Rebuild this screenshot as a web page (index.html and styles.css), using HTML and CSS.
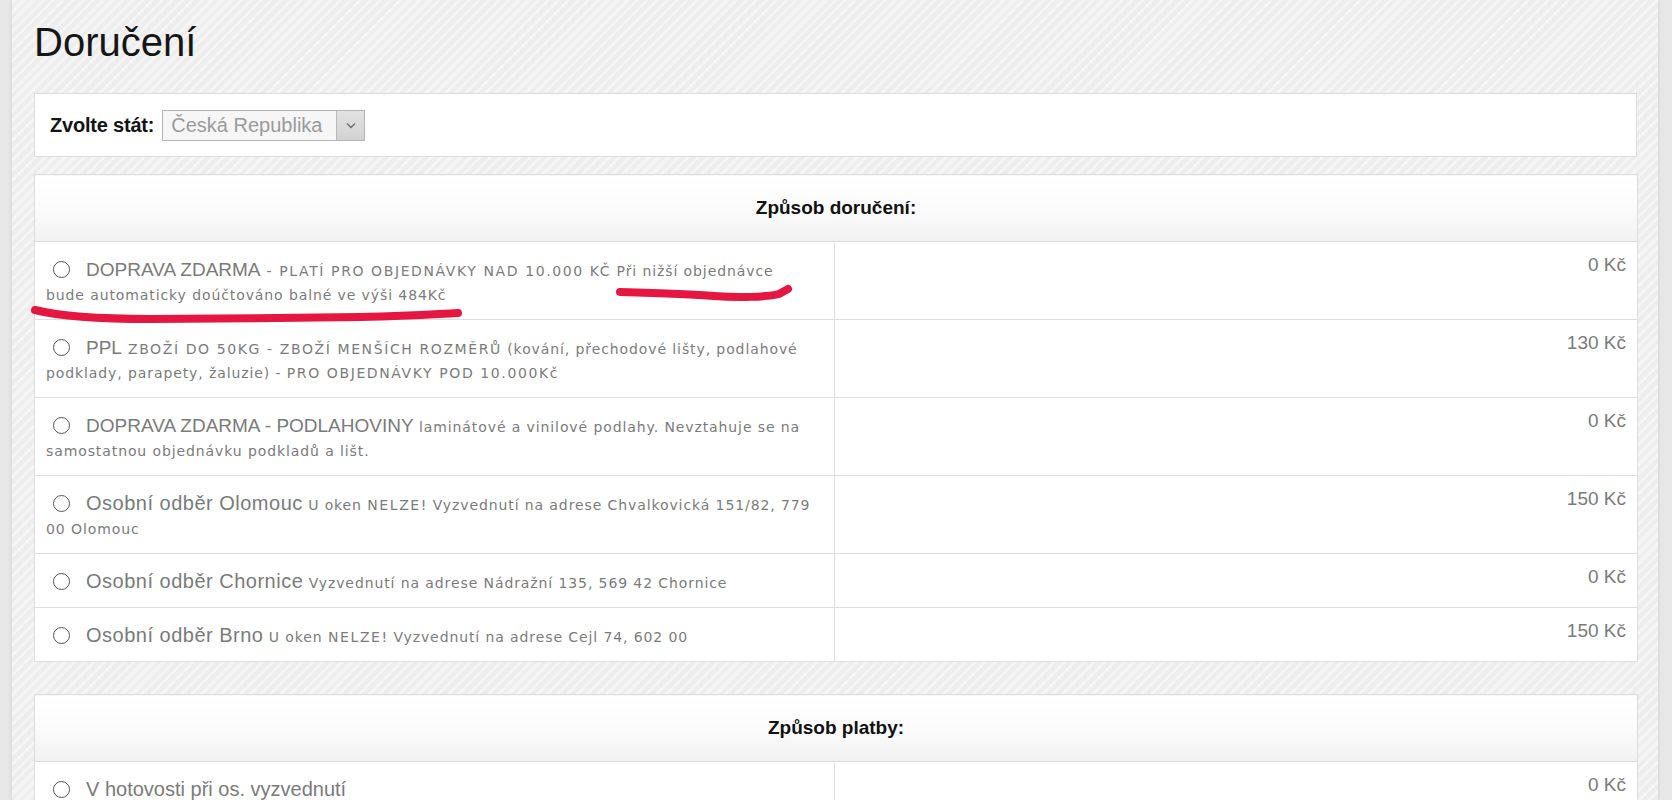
FILE: index.html
```html
<!DOCTYPE html>
<html lang="cs">
<head>
<meta charset="utf-8">
<title>Doručení</title>
<link rel="stylesheet" href="styles.css">
</head>
<body>
<div class="page">
  <h1 class="title">Doručení</h1>

  <div class="country">
    <span class="country-label">Zvolte stát:</span>
    <div class="select"><span class="select-value">Česká Republika</span><span class="select-arrow"><svg width="10" height="7" viewBox="0 0 10 7"><path d="M1 1.5 L5 5.5 L9 1.5" fill="none" stroke="#6a6a6a" stroke-width="1.3"/></svg></span></div>
  </div>

  <table class="options">
    <colgroup><col class="col-name"><col class="col-price"></colgroup>
    <thead><tr><th colspan="2">Způsob doručení:</th></tr></thead>
    <tbody>
      <tr><td class="name"><span class="radio"></span><span class="big">DOPRAVA ZDARMA</span><span class="small"><span class="caps"> - PLATÍ PRO OBJEDNÁVKY NAD 10.000 KČ</span> Při nižší objednávce bude automaticky doúčtováno balné ve výši 484Kč</span></td><td class="price">0 Kč</td></tr>
      <tr><td class="name"><span class="radio"></span><span class="big">PPL</span><span class="small"><span class="caps"> ZBOŽÍ DO 50KG - ZBOŽÍ MENŠÍCH ROZMĚRŮ</span> (kování, přechodové lišty, podlahové podklady, parapety, žaluzie) - <span class="caps">PRO OBJEDNÁVKY POD 10.000K</span>č</span></td><td class="price">130 Kč</td></tr>
      <tr><td class="name"><span class="radio"></span><span class="big">DOPRAVA ZDARMA - PODLAHOVINY</span><span class="small"> laminátové a vinilové podlahy. Nevztahuje se na samostatnou objednávku podkladů a lišt.</span></td><td class="price">0 Kč</td></tr>
      <tr><td class="name"><span class="radio"></span><span class="big lower">Osobní odběr Olomouc</span><span class="small"> U oken <span class="caps">NELZE</span>! Vyzvednutí na adrese Chvalkovická 151/82, 779 00 Olomouc</span></td><td class="price">150 Kč</td></tr>
      <tr><td class="name"><span class="radio"></span><span class="big lower">Osobní odběr Chornice</span><span class="small"> Vyzvednutí na adrese Nádražní 135, 569 42 Chornice</span></td><td class="price">0 Kč</td></tr>
      <tr><td class="name"><span class="radio"></span><span class="big lower">Osobní odběr Brno</span><span class="small"> U oken <span class="caps">NELZE</span>! Vyzvednutí na adrese Cejl 74, 602 00</span></td><td class="price">150 Kč</td></tr>
    </tbody>
  </table>

  <table class="options">
    <colgroup><col class="col-name"><col class="col-price"></colgroup>
    <thead><tr><th colspan="2">Způsob platby:</th></tr></thead>
    <tbody>
      <tr><td class="name"><span class="radio"></span><span class="big mid">V hotovosti při os. vyzvednutí</span></td><td class="price">0 Kč</td></tr>
    </tbody>
  </table>
</div>

<svg class="marks" width="1672" height="800" viewBox="0 0 1672 800">
  <path d="M35 310 C 55 315, 90 319, 150 319 S 300 318, 360 317 S 435 314, 458 313" fill="none" stroke="#e5163f" stroke-width="8" stroke-linecap="round"/>
  <path d="M620 292 C 655 293, 690 294, 714 296 S 768 297, 779 294 L 788 289" fill="none" stroke="#e5163f" stroke-width="8" stroke-linecap="round" stroke-linejoin="round"/>
</svg>
</body>
</html>
```

FILE: styles.css
```css
html, body {
  margin: 0;
  padding: 0;
}

body {
  background: #e7e7e7;
  font-family: "Liberation Sans", Arial, sans-serif;
  color: #777;
  position: relative;
  overflow: hidden;
  height: 800px;
}

.page {
  margin: 0 14px 0 12px;
  padding: 0 21px 0 22px;
  min-height: 800px;
  background-color: #f0f0f0;
  background-image: repeating-linear-gradient(135deg, rgba(255,255,255,0.3) 0 3px, rgba(0,0,0,0.01) 3px 7px);
  box-shadow: 0 0 4px rgba(0,0,0,0.10);
  overflow: hidden;
}

.title {
  margin: 19px 0 28px;
  font-size: 40px;
  line-height: 46px;
  font-weight: normal;
  color: #161616;
}

.country {
  display: flex;
  align-items: center;
  background: #fff;
  border: 1px solid #dcdcdc;
  padding: 16px 15px 15px;
  margin-bottom: 17px;
}

.country-label {
  font-size: 20px;
  font-weight: bold;
  color: #141414;
  margin-right: 8px;
  letter-spacing: -0.2px;
}

.select {
  display: flex;
  width: 203px;
  height: 31px;
  box-sizing: border-box;
  border: 1px solid #b4b4b4;
  background: #f6f6f6;
}

.select-value {
  flex: 1;
  padding-left: 8px;
  font-size: 20px;
  line-height: 29px;
  color: #9a9a9a;
  white-space: nowrap;
}

.select-arrow {
  width: 27px;
  display: flex;
  align-items: center;
  justify-content: center;
  border-left: 1px solid #b8b8b8;
  background: linear-gradient(#e2e2e2, #d2d2d2);
}

.options {
  width: 1603px;
  table-layout: fixed;
  border-collapse: collapse;
  background: #fff;
  margin-bottom: 32px;
}

.col-name { width: 800px; }
.col-price { width: 803px; }

.options th {
  border: 1px solid #dcdcdc;
  padding: 21px 10px;
  line-height: 24px;
  font-size: 19px;
  font-weight: bold;
  color: #111;
  text-align: center;
  background: linear-gradient(#ffffff 0%, #fbfbfb 50%, #f1f1f1 100%);
}

.options td {
  border: 1px solid #dedede;
  vertical-align: top;
  line-height: 24px;
  font-size: 19px;
}

.name {
  padding: 16px 20px 13px 11px;
}

.price {
  padding: 11px 11px 13px;
  text-align: right;
  color: #7a7a7a;
}

.radio {
  display: inline-block;
  box-sizing: border-box;
  width: 17px;
  height: 17px;
  border: 1.5px solid #555;
  border-radius: 50%;
  margin: 0 16px 0 7px;
  vertical-align: -2px;
  line-height: 0;
  background: #fff;
}

.big {
  font-size: 19px;
  line-height: 20px;
  color: #7a7a7a;
}

.big.lower {
  font-size: 20px;
  letter-spacing: 0.5px;
}

.big.mid {
  font-size: 20px;
}

.small {
  font-family: "DejaVu Sans", Verdana, sans-serif;
  font-size: 14px;
  line-height: 14px;
  letter-spacing: 0.9px;
  color: #7b7b7b;
}

.caps {
  letter-spacing: 1.6px;
}

.marks {
  position: absolute;
  left: 0;
  top: 0;
  pointer-events: none;
}
```
